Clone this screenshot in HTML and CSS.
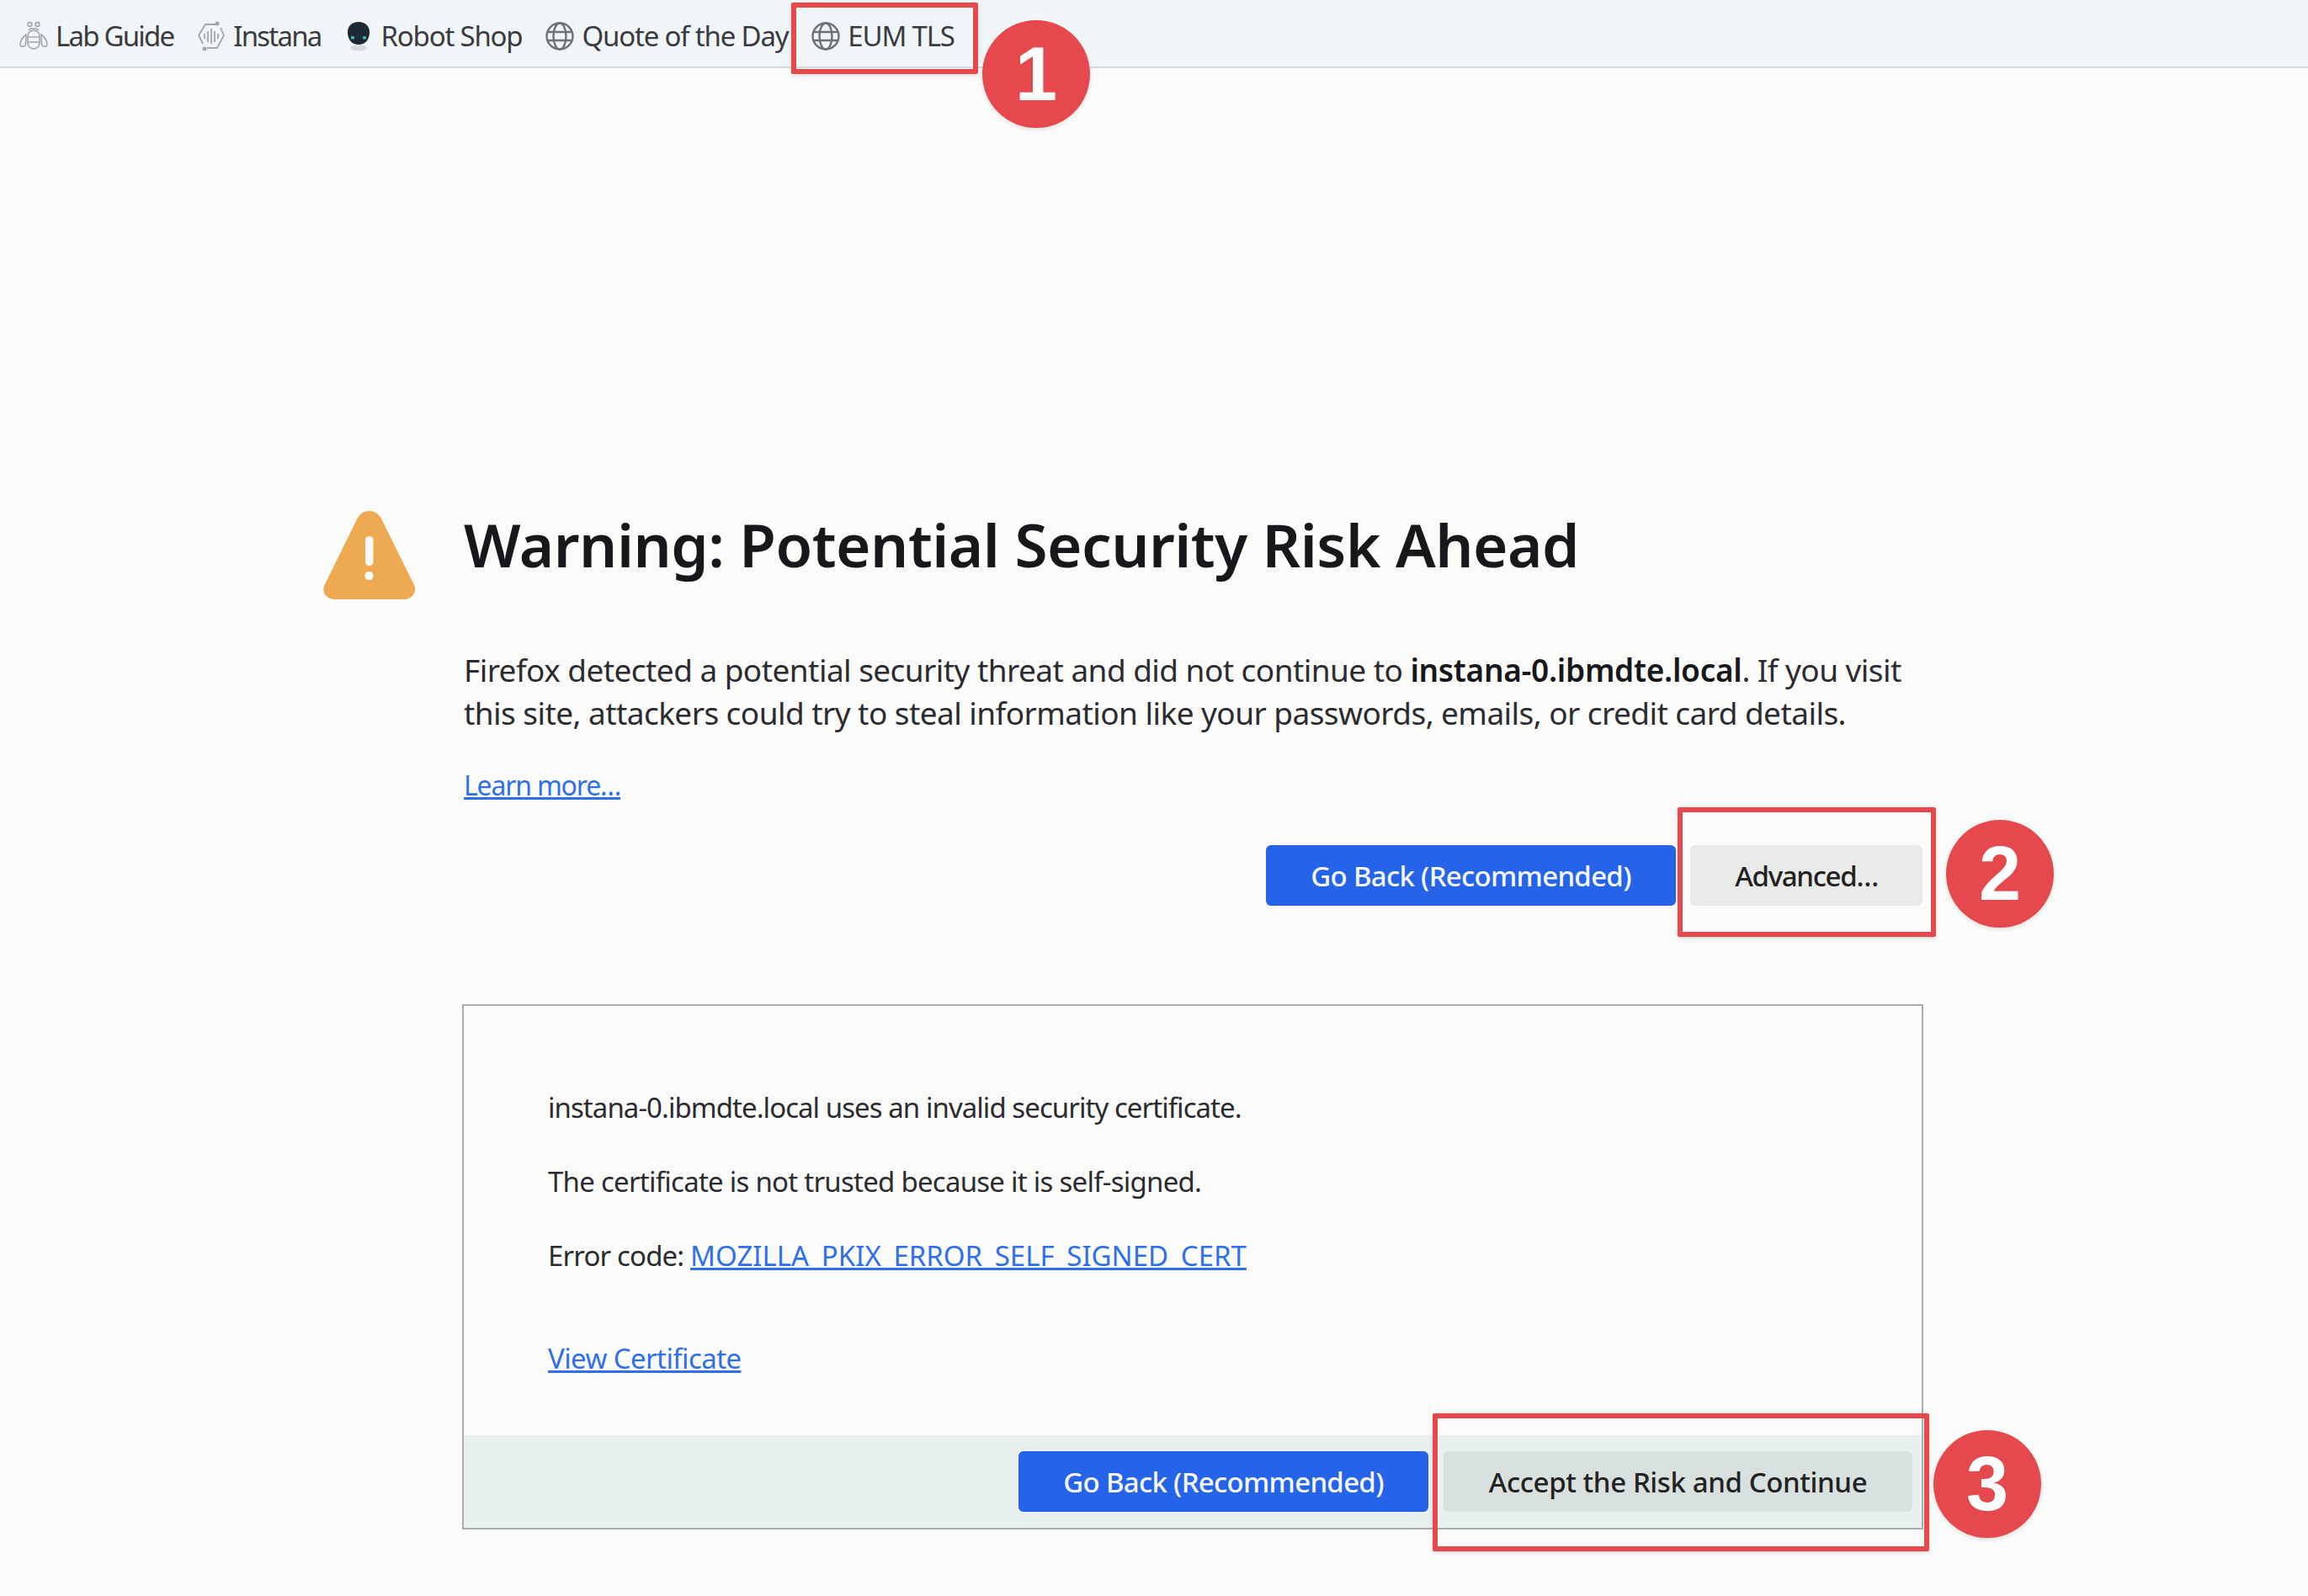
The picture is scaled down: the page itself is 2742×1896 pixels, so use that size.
FILE: index.html
```html
<!DOCTYPE html>
<html lang="en">
<head>
<meta charset="UTF-8" />
<title>Warning: Potential Security Risk Ahead</title>
<link rel="stylesheet" href="styles.css">
</head>
<body>

<nav class="toolbar">
  <a class="bookmark tight">
    <svg class="bm-icon" viewBox="0 0 36 36" fill="none" stroke="#a3a7a9" stroke-width="1.6">
      <circle cx="13.5" cy="4" r="2.4"/><circle cx="22.5" cy="4" r="2.4"/>
      <path d="M12 11c3-3 9-3 12 0"/>
      <rect x="11" y="11" width="14" height="22" rx="7"/>
      <path d="M11 19h14M11 25h14"/>
      <path d="M9 16c-4 3-7 8-7 12 0 3 4 3 6 1 1-3 1-9 1-13zM27 16c4 3 7 8 7 12 0 3-4 3-6 1-1-3-1-9-1-13z"/>
    </svg>
    Lab Guide
  </a>
  <a class="bookmark tight">
    <svg class="bm-icon" viewBox="0 0 36 36" fill="none" stroke="#a3a7a9" stroke-width="1.8">
      <path d="M23 4H11L3 17l5 10M13 32h12l8-15-4-9"/>
      <circle cx="25" cy="3" r="1.6" fill="#a3a7a9"/><circle cx="10" cy="33" r="1.6" fill="#a3a7a9"/>
      <path d="M10 15v6M14 12v13M18 9v18M22 12v13M26 15v6"/>
    </svg>
    Instana
  </a>
  <a class="bookmark">
    <svg class="bm-icon" viewBox="0 0 36 36">
      <ellipse cx="18" cy="32" rx="10" ry="3.5" fill="#d5d9d9"/>
      <path d="M18 1c8 0 13 5 13 12 0 9-5 15-13 15S5 22 5 13C5 6 10 1 18 1z" fill="#1d2a33"/>
      <rect x="9" y="18" width="4" height="3.5" rx="1.2" fill="#2fc4c0"/>
      <rect x="23" y="18" width="4" height="3.5" rx="1.2" fill="#2fc4c0"/>
    </svg>
    Robot Shop
  </a>
  <a class="bookmark">
    <svg class="bm-icon" viewBox="0 0 36 36" fill="none" stroke="#6d7074" stroke-width="2.4">
      <circle cx="18" cy="18" r="15.500"/>
      <ellipse cx="18" cy="18" rx="7.500" ry="15.500"/>
      <path d="M3.500 13h29M3.500 23h29"/>
    </svg>
    Quote of the Day
  </a>
  <a class="bookmark">
    <svg class="bm-icon" viewBox="0 0 36 36" fill="none" stroke="#6d7074" stroke-width="2.4">
      <circle cx="18" cy="18" r="15.500"/>
      <ellipse cx="18" cy="18" rx="7.500" ry="15.500"/>
      <path d="M3.500 13h29M3.500 23h29"/>
    </svg>
    EUM TLS
  </a>
</nav>

<main class="page">
  <svg class="warn-icon" viewBox="0 0 111 105">
    <path d="M55.500 0c7 0 12 4 15 10l38 77c5 9-2 18-11 18H14c-9 0-16-9-11-18l38-77c3-6 8-10 14.500-10z" fill="#edaa52"/>
    <rect x="51" y="30" width="9.500" height="35" rx="4.500" fill="#fbfcfa"/>
    <rect x="50.500" y="72" width="10" height="10" rx="4.500" fill="#fbfcfa"/>
  </svg>

  <div class="content">
    <h1>Warning: Potential Security Risk Ahead</h1>
    <p class="intro">Firefox detected a potential security threat and did not continue to <b>instana-0.ibmdte.local</b>. If you visit<br>this site, attackers could try to steal information like your passwords, emails, or credit card details.</p>
    <p class="learn"><a href="#">Learn more…</a></p>

    <div class="actions">
      <button class="btn btn-primary">Go Back (Recommended)</button>
      <button class="btn btn-plain">Advanced…</button>
    </div>

    <section class="details">
      <div class="details-body">
        <p class="line-invalid">instana-0.ibmdte.local uses an invalid security certificate.</p>
        <p class="line-trust">The certificate is not trusted because it is self-signed.</p>
        <p>Error code: <a class="code-link" href="#">MOZILLA_PKIX_ERROR_SELF_SIGNED_CERT</a></p>
        <p class="view-cert"><a href="#">View Certificate</a></p>
      </div>
      <div class="details-footer">
        <button class="btn btn-primary">Go Back (Recommended)</button>
        <button class="btn btn-accept">Accept the Risk and Continue</button>
      </div>
    </section>
  </div>
</main>

<!-- red annotations on top of the screenshot -->
<div class="mark mark-1"></div>
<div class="mark mark-2"></div>
<div class="mark mark-3"></div>
<div class="num num-1">1</div>
<div class="num num-2">2</div>
<div class="num num-3">3</div>

</body>
</html>
```

FILE: styles.css
```css
html, body {
  margin: 0; padding: 0;
  height: 100%;
  background: #fbfcfa;
  font-family: "Noto Sans", sans-serif;
  color: #2b2b31;
  overflow: hidden;
}
body {
  position: relative;
}
a {
  color: #2f6fec;
  text-decoration: underline;
}

.toolbar {
  display: flex;
  align-items: center;
  gap: 27px;
  height: 79px;
  padding-left: 22px;
  background: #f0f6f7;
  border-bottom: 2px solid #d6dada;
}
.bookmark {
  display: flex;
  align-items: center;
  gap: 8px;
  padding-top: 5px;
  font-size: 33px;
  letter-spacing: -1.2px;
  color: #3a3a40;
  text-decoration: none;
}
.bookmark.tight {
  letter-spacing: -1.8px;
}
.bm-icon {
  width: 36px;
  height: 36px;
  margin-top: 2px;
}

.page {
  display: flex;
  gap: 57px;
  padding: 526px 0 0 383px;
}
.warn-icon {
  flex: none;
  width: 111px;
  height: 105px;
}
.content {
  width: 1734px;
}
h1 {
  margin: -3px 0 0;
  font-size: 71px;
  font-weight: 600;
  line-height: 86px;
  letter-spacing: -0.5px;
  color: #17171c;
}
.intro {
  margin: 80px 0 0;
  font-size: 37px;
  line-height: 51px;
  letter-spacing: -0.56px;
}
.intro b {
  font-weight: 600;
  letter-spacing: -0.3px;
  color: #17171c;
}
.learn {
  margin: 35px 0 0;
  font-size: 32px;
  line-height: 51px;
  letter-spacing: -1.2px;
}

.actions {
  display: flex;
  justify-content: flex-end;
  gap: 17px;
  margin-top: 46px;
  padding-right: 1px;
}
.btn {
  height: 72px;
  border: none;
  border-radius: 6px;
  font-family: inherit;
  font-size: 33px;
  font-weight: 500;
  letter-spacing: -0.7px;
}
.btn-primary {
  width: 487px;
  background: #2563e8;
  color: #f4f7fe;
}
.btn-plain {
  width: 276px;
  background: #e9ebe8;
  color: #222;
  letter-spacing: -1.3px;
}
.btn-accept {
  width: 557px;
  background: #d9e1e0;
  color: #222;
  letter-spacing: -0.4px;
}

.details {
  margin: 117px 0 0 -2px;
  height: 624px;
  display: flex;
  flex-direction: column;
  border: 2px solid #a9adaf;
  box-sizing: border-box;
}
.details-body {
  flex: 1;
  padding: 100px 0 0 100px;
  font-size: 33px;
  letter-spacing: -0.85px;
}
.details-body p {
  margin: 0 0 46px;
  line-height: 42px;
}
.details-body .line-invalid {
  letter-spacing: -0.95px;
}
.details-body .line-trust {
  letter-spacing: -0.75px;
}
.details-body .view-cert {
  margin-top: 80px;
  letter-spacing: -0.6px;
}
.code-link {
  letter-spacing: 0;
}
.details-footer {
  display: flex;
  justify-content: flex-end;
  gap: 18px;
  padding: 19px 11px 19px 0;
  background: #e9f0f0;
}

/* annotations */
.mark {
  position: absolute;
  box-sizing: border-box;
  border: 6px solid #e5484d;
  border-radius: 2px;
  box-shadow: 0 2px 5px rgba(0,0,0,0.12);
}
.mark-1 { left: 940px; top: 3px; width: 222px; height: 85px; }
.mark-2 { left: 1993px; top: 959px; width: 307px; height: 154px; }
.mark-3 { left: 1702px; top: 1679px; width: 590px; height: 164px; }
.num {
  position: absolute;
  width: 128px;
  height: 128px;
  border-radius: 50%;
  background: #e5484d;
  color: #fff;
  font-family: "Liberation Sans", sans-serif;
  font-weight: 700;
  font-size: 90px;
  line-height: 128px;
  text-align: center;
  box-shadow: 0 2px 5px rgba(0,0,0,0.12);
}
.num-1 { left: 1167px; top: 24px; }
.num-2 { left: 2312px; top: 974px; }
.num-3 { left: 2297px; top: 1699px; }
```
